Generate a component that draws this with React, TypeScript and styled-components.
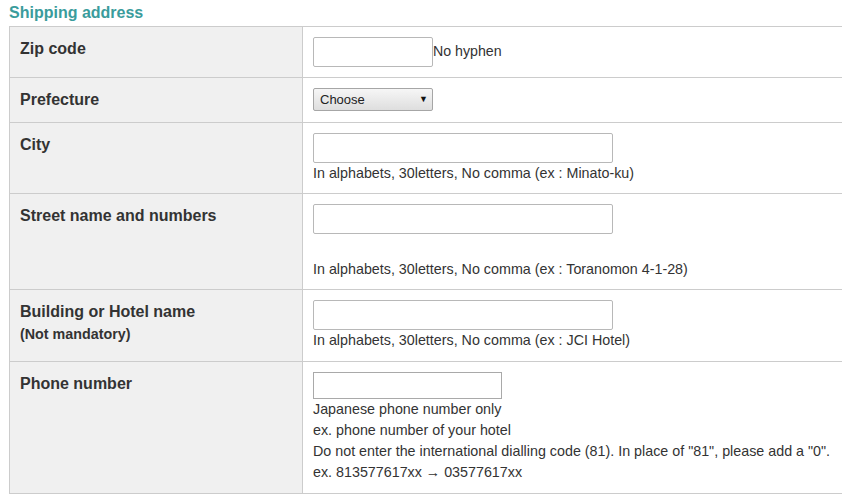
import styled, { createGlobalStyle } from "styled-components";

const Global = createGlobalStyle`
  html, body {
    margin: 0;
    padding: 0;
    background: #fff;
    overflow: hidden;
  }
  body {
    font-family: "Liberation Sans", Arial, sans-serif;
    color: #333;
  }
`;

type Row = {
  label: string;
  sub?: string;
  field: React.ReactNode;
};

export default function App() {
  const rows: Row[] = [
    {
      label: "Zip code",
      field: (
        <Inline>
          <TextInput $width={120} />
          <Note>No hyphen</Note>
        </Inline>
      ),
    },
    {
      label: "Prefecture",
      field: (
        <SelectWrap>
          <Select defaultValue="">
            <option value="">Choose</option>
          </Select>
          <Arrow>▼</Arrow>
        </SelectWrap>
      ),
    },
    {
      label: "City",
      field: (
        <>
          <TextInput $width={300} />
          <Help>In alphabets, 30letters, No comma (ex : Minato-ku)</Help>
        </>
      ),
    },
    {
      label: "Street name and numbers",
      field: (
        <>
          <TextInput $width={300} />
          <Spacer />
          <Help>In alphabets, 30letters, No comma (ex : Toranomon 4-1-28)</Help>
        </>
      ),
    },
    {
      label: "Building or Hotel name",
      sub: "(Not mandatory)",
      field: (
        <>
          <TextInput $width={300} />
          <Help>In alphabets, 30letters, No comma (ex : JCI Hotel)</Help>
        </>
      ),
    },
    {
      label: "Phone number",
      field: (
        <>
          <TextInput $width={189} $height={27} $square />
          <HelpList>
            <li>Japanese phone number only</li>
            <li>ex. phone number of your hotel</li>
            <li>
              Do not enter the international dialling code (81). In place of
              "81", please add a "0".
            </li>
            <li>ex. 813577617xx → 03577617xx</li>
          </HelpList>
        </>
      ),
    },
  ];

  return (
    <>
      <Global />
      <Page>
        <Title>Shipping address</Title>
        <Table>
          <tbody>
            {rows.map((r) => (
              <tr key={r.label}>
                <LabelCell>
                  <Label>{r.label}</Label>
                  {r.sub && <SubLabel>{r.sub}</SubLabel>}
                </LabelCell>
                <FieldCell>{r.field}</FieldCell>
              </tr>
            ))}
          </tbody>
        </Table>
      </Page>
    </>
  );
}

const Page = styled.div`
  padding: 4px 0 0 9px;
`;

const Title = styled.h2`
  margin: 0 0 4px;
  font-size: 16px;
  line-height: 18px;
  font-weight: bold;
  color: #3a9c9c;
`;

const Table = styled.table`
  border-collapse: collapse;
  width: 840px;
  table-layout: fixed;
`;

const LabelCell = styled.th`
  width: 272px;
  background: #f0f0f0;
  border: 1px solid #cccccc;
  padding: 11px 10px 10px 10px;
  text-align: left;
  vertical-align: top;
`;

const Label = styled.div`
  font-size: 16px;
  line-height: 22px;
  font-weight: bold;
  color: #333;
`;

const SubLabel = styled.div`
  font-size: 14.3px;
  line-height: 22px;
  padding-bottom: 6px;
  font-weight: bold;
  color: #333;
`;

const FieldCell = styled.td`
  border: 1px solid #cccccc;
  border-right: none;
  padding: 10px 10px 10px 10px;
  vertical-align: top;
  font-size: 14.3px;
  line-height: 20px;
`;

const Inline = styled.div`
  display: flex;
  align-items: center;
`;

const TextInput = styled.input<{
  $width: number;
  $height?: number;
  $square?: boolean;
}>`
  display: block;
  box-sizing: border-box;
  width: ${(p) => p.$width}px;
  height: ${(p) => p.$height ?? 30}px;
  margin: 0;
  border: 1px solid ${(p) => (p.$square ? "#a9a9a9" : "#b8b8b8")};
  border-radius: ${(p) => (p.$square ? 0 : 2)}px;
  background: #fff;
  font-family: inherit;
  font-size: 14px;
`;

const Note = styled.span`
  font-size: 14.2px;
  line-height: 20px;
  color: #333;
  margin-top: -2px;
`;

const SelectWrap = styled.div`
  position: relative;
  width: 120px;
  height: 24px;
`;

const Select = styled.select`
  appearance: none;
  display: block;
  box-sizing: border-box;
  width: 120px;
  height: 23px;
  margin: 0;
  padding: 0 0 0 6px;
  border: 1px solid #a6a6a6;
  border-radius: 2px;
  background: linear-gradient(#f6f6f6, #dedede);
  font-family: "Liberation Sans", Arial, sans-serif;
  font-size: 13px;
  color: #222;
`;

const Arrow = styled.span`
  position: absolute;
  right: 5px;
  top: 5px;
  font-size: 9px;
  line-height: 12px;
  color: #111;
  pointer-events: none;
`;

const Help = styled.div`
  font-size: 14.3px;
  line-height: 20px;
  color: #333;
`;

const Spacer = styled.div`
  height: 25px;
`;

const HelpList = styled.ul`
  list-style: none;
  margin: 0;
  padding: 0;
  font-size: 14.3px;
  line-height: 21px;
  color: #333;
`;
